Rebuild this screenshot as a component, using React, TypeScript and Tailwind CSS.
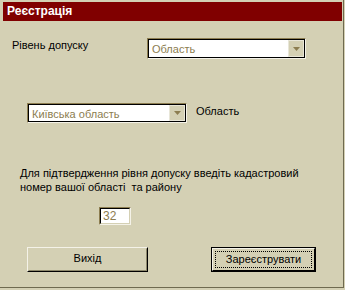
import React from "react";

const font = { fontFamily: '"Liberation Sans", Arial, sans-serif' };

const Arrow = () => (
  <svg width="7" height="4" viewBox="0 0 7 4">
    <path d="M0 0h7L3.5 4z" fill="#8c7d50" />
  </svg>
);

const Combo = ({ value, className }: { value: string; className: string }) => (
  <div className={`flex border border-t-[#8c7d50] border-l-[#8c7d50] border-r-[#f4f2e8] border-b-[#f4f2e8] ${className}`}>
    <div className="flex flex-1 border border-t-black border-l-black border-r-black border-b-black bg-white">
      <span className="flex-1 pl-[3px] pt-[3px] text-[11px] leading-[13px] text-[#8c7d50]">{value}</span>
      <div className="flex w-[16px] items-center justify-center border border-[#e8e6d8] bg-[#d4d0b4]">
        <Arrow />
      </div>
    </div>
  </div>
);

const App = () => (
  <div className="h-[290px] w-[345px] bg-[#d4d0b4] text-black" style={font}>
    <div className="h-[288px] w-[344px] border-b border-r border-[#6f6a50]">
      <div className="ml-[3px] mr-[1px] pt-[2px]">
        <div className="h-[19px] bg-[#800000] pl-[4px] pt-[2px] text-[12px] font-bold leading-[15px] text-white">
          Реєстрація
        </div>
      </div>

      <div className="mt-[17px] flex">
        <div className="w-[147px] pl-[12px] pt-[1px] text-[11px] leading-[13px]">Рівень допуску</div>
        <Combo value="Область" className="h-[21px] w-[159px]" />
      </div>

      <div className="mt-[44px] flex items-start">
        <Combo value="Київська область" className="ml-[27px] h-[20px] w-[160px]" />
        <div className="ml-[9px] pt-[2px] text-[11px] leading-[13px]">Область</div>
      </div>

      <p className="ml-[20px] mt-[43px] text-[11px] leading-[14px]">
        Для підтвердження рівня допуску введіть кадастровий
        <br />
        номер вашої області&nbsp; та району
      </p>

      <div className="ml-[99px] mt-[13px] h-[18px] w-[32px] border border-b-[#f4f2e8] border-l-[#8c7d50] border-r-[#f4f2e8] border-t-[#8c7d50]">
        <div className="h-full border border-b-[#d4d0b4] border-l-black border-r-[#d4d0b4] border-t-black bg-white pl-[2px] text-[12px] leading-[14px] text-[#8c7d50]">
          32
        </div>
      </div>

      <div className="mt-[22px] flex">
        <button className="ml-[27px] h-[25px] w-[121px] border border-b-black border-l-[#f4f2e8] border-r-black border-t-[#f4f2e8] text-[11px]">
          <div className="h-full border border-b-[#8c876a] border-l-[#d4d0b4] border-r-[#8c876a] border-t-[#d4d0b4] pt-[1px]">
            Вихід
          </div>
        </button>
        <button className="ml-[63px] h-[25px] w-[105px] border border-black text-[11px]">
          <div className="h-full border border-b-black border-l-[#f4f2e8] border-r-black border-t-[#f4f2e8] p-[2px]">
            <div className="h-full border border-dotted border-black leading-[15px]">Зареєструвати</div>
          </div>
        </button>
      </div>
    </div>
  </div>
);

export default App;
